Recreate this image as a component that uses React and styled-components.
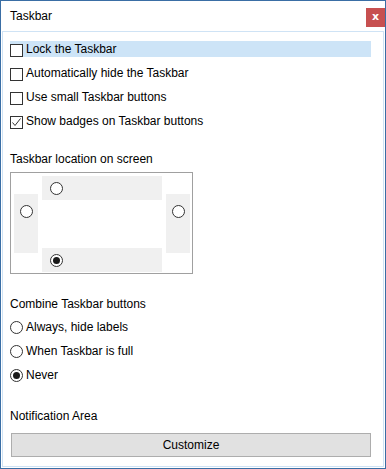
import React from "react";
import styled, { createGlobalStyle } from "styled-components";

const Global = createGlobalStyle`
  html, body { margin: 0; padding: 0; background: #ffffff; }
  body { font-family: "Liberation Sans", Arial, sans-serif; font-size: 12px; color: #000; }
  * { box-sizing: border-box; }
`;

const Window = styled.div`
  width: 386px;
  height: 469px;
  border: 1px solid #3a6ea5;
  background: #fff;
  display: flex;
  flex-direction: column;
`;

const TitleBar = styled.div`
  height: 30px;
  display: flex;
  align-items: flex-start;
  justify-content: space-between;
  padding-left: 9px;
`;

const Title = styled.div`
  font-size: 12px;
  line-height: 16px;
  margin-top: 7px;
`;

const Close = styled.div`
  width: 19px;
  height: 19px;
  margin-top: 7px;
  margin-right: 0px;
  background: #c75050;
  color: #fff;
  font-weight: bold;
  font-size: 11px;
  line-height: 17px;
  text-align: center;
  font-family: "DejaVu Sans", sans-serif;
`;

const Panel = styled.div`
  flex: 1;
  margin: 0 1px 1px 1px;
  border: 1px solid #cfe3f5;
  padding: 9px 12px 0 7px;
  display: flex;
  flex-direction: column;
`;

const Row = styled.div`
  display: flex;
  align-items: center;
  height: 16px;
  margin-top: ${(p) => p.$mt || 0}px;
  background: ${(p) => (p.$active ? "#cde4f7" : "transparent")};
  gap: 3px;
`;

const Box = styled.div`
  width: 13px;
  height: 13px;
  border: 1px solid #333;
  background: #fff;
  margin-top: 3px;
  flex: none;
  display: flex;
  align-items: center;
  justify-content: center;
`;

const RadioCircle = styled.div`
  width: 13px;
  height: 13px;
  border-radius: 50%;
  border: 1px solid #333;
  background: #fff;
  flex: none;
  display: flex;
  align-items: center;
  justify-content: center;
  &::after {
    content: "";
    display: ${(p) => (p.$checked ? "block" : "none")};
    width: 7px;
    height: 7px;
    border-radius: 50%;
    background: #1a1a1a;
  }
`;

const Label = styled.div`
  line-height: 16px;
  height: 16px;
  margin-top: ${(p) => p.$mt || 0}px;
`;

const Screen = styled.div`
  margin-top: 5px;
  width: 183px;
  height: 102px;
  border: 1px solid #a0a0a0;
  display: grid;
  grid-template-columns: 24px 4px 120px 4px 24px;
  grid-template-rows: 24px 1fr 24px;
  padding: 3px 2px 1px 3px;
`;

const Bar = styled.div`
  background: #f0f0f0;
  display: flex;
  justify-content: ${(p) => (p.$vertical ? "center" : "flex-start")};
  align-items: ${(p) => (p.$vertical ? "flex-start" : "center")};
  padding: ${(p) => (p.$vertical ? "11px 0 0 0" : "0 0 0 8px")};
`;

const Button = styled.div`
  margin-top: 9px;
  margin-left: 1px;
  margin-right: 0;
  height: 24px;
  border: 1px solid #adadad;
  background: #e1e1e1;
  display: flex;
  align-items: center;
  justify-content: center;
`;

const Check = () => (
  <svg width="11" height="11" viewBox="0 0 11 11">
    <path d="M1.5 5.5 L4 8.5 L9.5 1.5" fill="none" stroke="#333" strokeWidth="1" />
  </svg>
);

const checks = [
  { label: "Lock the Taskbar", checked: false, active: true },
  { label: "Automatically hide the Taskbar", checked: false },
  { label: "Use small Taskbar buttons", checked: false },
  { label: "Show badges on Taskbar buttons", checked: true },
];

const radios = [
  { label: "Always, hide labels", checked: false },
  { label: "When Taskbar is full", checked: false },
  { label: "Never", checked: true },
];

export default function App() {
  return (
    <>
      <Global />
      <Window>
        <TitleBar>
          <Title>Taskbar</Title>
          <Close>x</Close>
        </TitleBar>
        <Panel>
          {checks.map((c, i) => (
            <Row key={c.label} $active={c.active} $mt={i ? 8 : 0}>
              <Box>{c.checked && <Check />}</Box>
              <span>{c.label}</span>
            </Row>
          ))}
          <Label $mt={22}>Taskbar location on screen</Label>
          <Screen>
            <Bar $vertical style={{ gridColumn: 1, gridRow: "2 / 3", marginTop: -6, marginBottom: -5 }}>
              <RadioCircle />
            </Bar>
            <Bar style={{ gridColumn: 3, gridRow: 1 }}>
              <RadioCircle />
            </Bar>
            <Bar $vertical style={{ gridColumn: 5, gridRow: "2 / 3", marginTop: -6, marginBottom: -5 }}>
              <RadioCircle />
            </Bar>
            <Bar style={{ gridColumn: 3, gridRow: 3 }}>
              <RadioCircle $checked />
            </Bar>
          </Screen>
          <Label $mt={22}>Combine Taskbar buttons</Label>
          {radios.map((r, i) => (
            <Row key={r.label} $mt={i ? 8 : 7}>
              <RadioCircle $checked={r.checked} />
              <span>{r.label}</span>
            </Row>
          ))}
          <Label $mt={25}>Notification Area</Label>
          <Button>Customize</Button>
        </Panel>
      </Window>
    </>
  );
}
